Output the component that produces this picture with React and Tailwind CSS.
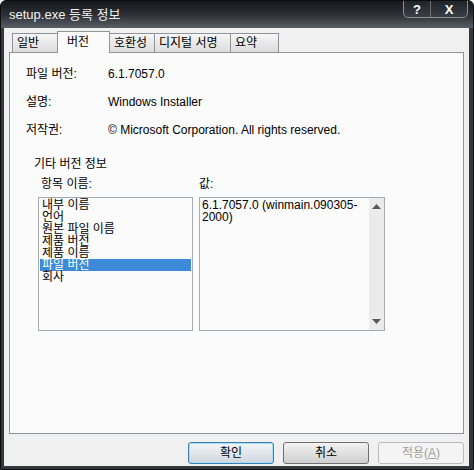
import React from 'react';

const font = { fontFamily: '"Liberation Sans", "Noto Sans CJK KR", sans-serif' };

const tabs = [
  { label: '일반', w: 'w-[46px]' },
  { label: '버전', w: 'w-[53px]' },
  { label: '호환성', w: 'w-[46px]' },
  { label: '디지털 서명', w: 'w-[77px]' },
  { label: '요약', w: 'w-[49px]' },
];

const items = ['내부 이름', '언어', '원본 파일 이름', '제품 버전', '제품 이름', '파일 버전', '회사'];

// info rows at the top of the 버전 tab
const InfoRow = ({ label, value }) => (
  <div className="flex h-[28px] items-center">
    <span className="w-[82px] shrink-0">{label}</span>
    <span>{value}</span>
  </div>
);

const Tab = ({ label, w, active }) =>
  active ? (
    <div className={`relative z-10 -mb-px -ml-px flex h-[22px] items-start whitespace-nowrap border border-b-0 border-[#8d949a] bg-[#fbfbfb] px-[9px] pt-[3px] text-[12px] leading-[15px] ${w}`}>
      {label}
    </div>
  ) : (
    <div className={`-ml-px flex h-[19px] items-center whitespace-nowrap border border-b-0 border-[#8d949a] bg-gradient-to-b from-[#f6f6f6] to-[#dcdcdc] px-[4px] text-[12px] leading-[15px] first:ml-0 ${w}`}>
      {label}
    </div>
  );

const Button = ({ children, variant }) => {
  if (variant === 'default') {
    return (
      <button className="h-[22px] w-[86px] rounded-[3px] border border-[#3c7fb1] bg-gradient-to-b from-[#f2f5f7] to-[#cfd8de] text-[12px] shadow-[inset_0_0_0_1px_#a6def5]">
        {children}
      </button>
    );
  }
  if (variant === 'disabled') {
    return (
      <button className="h-[22px] w-[86px] rounded-[3px] border border-[#b8bcbf] bg-[#f4f4f4] text-[12px] text-[#a0a0a0]">
        {children}
      </button>
    );
  }
  return (
    <button className="h-[22px] w-[86px] rounded-[3px] border border-[#707070] bg-gradient-to-b from-[#f2f2f2] to-[#cfcfcf] text-[12px]">
      {children}
    </button>
  );
};

export default function App() {
  return (
    <div style={font} className="flex h-[470px] w-[474px] flex-col overflow-hidden rounded-t-[6px] border border-[#0c0e11] bg-[#34383e] text-[12px] text-black">
      {/* title bar */}
      <div className="relative flex h-[27px] shrink-0 items-center bg-gradient-to-b from-[#16181c] via-[#2c2f35] to-[#5a5f66] pl-[8px]">
        <span className="text-[13px] text-[#f2f2f2]">setup.exe 등록 정보</span>
        <div className="absolute right-[5px] top-[-1px] flex h-[18px] overflow-hidden rounded-b-[5px] border border-[#8a8f96] bg-gradient-to-b from-[#202328] to-[#3b3f46]">
          <div className="flex w-[27px] items-center justify-center border-r border-[#6c7178] text-[13px] font-bold leading-none text-white">?</div>
          <div className="flex w-[36px] items-center justify-center text-[13px] font-bold leading-none text-white">X</div>
        </div>
      </div>

      {/* body */}
      <div className="mx-[3px] mb-[3px] mr-[4px] flex flex-1 flex-col bg-[#f0f0f0]">
        <div className="ml-[8px] mt-[3px] flex h-[21px] items-end">
          {tabs.map((t) => (
            <Tab key={t.label} label={t.label} w={t.w} active={t.label === '버전'} />
          ))}
        </div>

        <div className="ml-[5px] mr-[5px] flex h-[382px] flex-col border border-[#8d949a] bg-[#fbfbfb]">
          <div className="pl-[16px] pt-[7px]">
            <InfoRow label="파일 버전:" value="6.1.7057.0" />
            <InfoRow label="설명:" value="Windows Installer" />
            <InfoRow label="저작권:" value="© Microsoft Corporation. All rights reserved." />
          </div>

          <div className="mt-[12px] pl-[24px] leading-[16px]">기타 버전 정보</div>

          <div className="ml-[28px] mt-[4px] flex gap-[6px]">
            <div className="flex w-[155px] flex-col">
              <div className="h-[16px] pl-[3px] leading-[16px]">항목 이름:</div>
              <div className="mt-[5px] h-[134px] border border-[#a5acb2] bg-[#fbfbfb] p-px">
                {items.map((it) => (
                  <div
                    key={it}
                    className={
                      it === '파일 버전'
                        ? 'h-[12px] bg-[#3c8ad8] px-[2px] leading-[12px] text-white'
                        : 'h-[12px] px-[2px] leading-[12px]'
                    }
                  >
                    {it}
                  </div>
                ))}
              </div>
            </div>

            <div className="flex w-[186px] flex-col">
              <div className="h-[16px] leading-[16px]">값:</div>
              <div className="mt-[5px] flex h-[134px] border border-[#a5acb2] bg-[#fbfbfb]">
                <div className="flex-1 pl-[2px] pt-px leading-[12px]">
                  <div>6.1.7057.0 (winmain.090305-</div>
                  <div>2000)</div>
                </div>
                <div className="flex w-[15px] flex-col items-center justify-between bg-[#ebebeb] py-[6px]">
                  <svg width="9" height="5" viewBox="0 0 9 5"><path d="M0 5 L4.5 0 L9 5 Z" fill="#5a5a5a" /></svg>
                  <svg width="9" height="5" viewBox="0 0 9 5"><path d="M0 0 L4.5 5 L9 0 Z" fill="#5a5a5a" /></svg>
                </div>
              </div>
            </div>
          </div>
        </div>

        <div className="mr-[5px] mt-[8px] flex justify-end gap-[9px]">
          <Button variant="default">확인</Button>
          <Button>취소</Button>
          <Button variant="disabled">
            적용(<span className="underline">A</span>)
          </Button>
        </div>
      </div>
    </div>
  );
}
